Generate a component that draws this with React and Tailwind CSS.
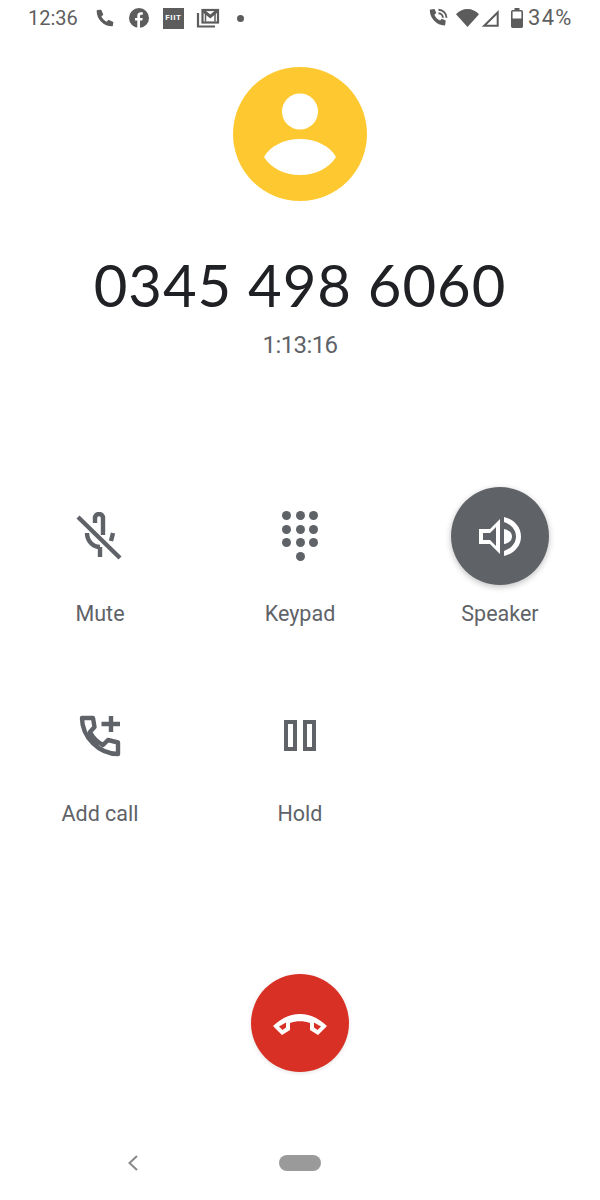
import React from "react";

const G = "#5f6368";
const S = "#5c5c5c";

function StatusBar() {
  return (
    <div className="flex h-9 items-center justify-between px-7 text-[#5f5f5f]">
      <div className="flex items-center">
        <span className="w-[50px] text-[20px] leading-9 font-['Roboto',sans-serif]">12:36</span>
        <svg className="ml-[17px]" width="20" height="20" viewBox="0 0 24 24" fill={S}>
          <path d="M3 2.500 7.500 2 10 8 7.600 10.200c1.300 2.700 3.600 5 6.400 6.400l2.200-2.600 5.800 2.700-.5 4.300c-.1.600-.5 1-1 1C10.500 22 2 13.500 2 3.500c0-.5.400-.9 1-1Z" />
        </svg>
        <svg className="ml-[14px]" width="20" height="20" viewBox="0 0 20 20">
          <circle cx="10" cy="10" r="10" fill={S} />
          <path d="M8.300 20v-7.400H6v-2.700h2.300V8c0-2.400 1.300-3.700 3.500-3.700 1 0 1.800.1 2 .1v2.400h-1.400c-1.100 0-1.400.6-1.400 1.400v1.700h2.700l-.4 2.700h-2.300V20Z" fill="#fff" />
        </svg>
        <div className="ml-[14px] flex h-[21px] w-[21px] items-center justify-center bg-[#5c5c5c] font-['Roboto',sans-serif] text-[8px] font-bold tracking-[0.6px] text-white">FIIT</div>
        <svg className="ml-[12px]" width="24" height="20" viewBox="0 0 24 20" fill="none">
          <path d="M2 5v13.500h17" stroke={S} strokeWidth="2.200" />
          <rect x="6.500" y="2" width="15.500" height="12.500" fill="#fff" stroke={S} strokeWidth="2.200" />
          <path d="M7 2.500 14.250 8.500 21.500 2.500" stroke={S} strokeWidth="3" />
          <path d="M9.500 4.500v9M19 4.500v9" stroke={S} strokeWidth="1.500" />
        </svg>
        <div className="ml-[17px] h-[7px] w-[7px] rounded-full bg-[#5c5c5c]" />
      </div>
      <div className="flex items-center">
        <svg width="19" height="20" viewBox="0 0 19 20" fill="none">
          <path d="M1.500 1.500 5.500 1l1.800 4-1.900 1.800c1 2.600 3 4.700 5.700 5.800l1.600-1.900 4 1.800-.5 4.200c0 .4-.4.7-.8.700C7.800 17.400.8 10.400.8 2.300c0-.4.300-.8.700-.8Z" fill={S} />
          <path d="M9.500 5.300c2.500 0 4.400 2 4.400 4.500M9.500 1.800c4.400 0 8 3.600 8 8" stroke={S} strokeWidth="1.900" />
        </svg>
        <svg className="ml-[8px]" width="23" height="18" viewBox="0 0 23 18" fill={S}>
          <path d="M0 5.200C3 2 7 0 11.500 0S20 2 23 5.200L11.500 18Z" />
        </svg>
        <svg className="ml-[2px]" width="18" height="18" viewBox="0 0 18 18" fill="none">
          <path d="M16.700 3.500V16.700H3.200Z" stroke={S} strokeWidth="2" />
        </svg>
        <svg className="ml-[12px]" width="12" height="20" viewBox="0 0 12 20" fill="none">
          <path d="M3.500 0h5v2h-5Z" fill={S} />
          <rect x="0.800" y="2.800" width="10.400" height="16.400" rx="1" stroke={S} strokeWidth="1.600" />
          <rect x="0.800" y="10.500" width="10.400" height="9" fill={S} />
        </svg>
        <span className="ml-[5px] w-[44px] text-[22px] leading-9 tracking-[1.3px] font-['Roboto',sans-serif]">34%</span>
      </div>
    </div>
  );
}

function CallAction({ label, active, children }) {
  return (
    <div className="flex flex-col items-center">
      <div className={"flex h-[98px] w-[98px] items-center justify-center rounded-full " + (active ? "bg-[#5f6368] shadow-[0_2px_6px_rgba(0,0,0,0.25)]" : "")}>
        {children}
      </div>
      <div className="mt-[15px] text-[21.5px] leading-7 text-[#5f6368] font-['Roboto',sans-serif]">{label}</div>
    </div>
  );
}

export default function App() {
  return (
    <div className="flex h-[1200px] w-[600px] flex-col overflow-hidden bg-white font-['Roboto',sans-serif]">
      <StatusBar />
      <div className="mt-[31px] flex justify-center">
        <svg width="134" height="134" viewBox="0 0 134 134">
          <circle cx="67" cy="67" r="67" fill="#fdc830" />
          <circle cx="67" cy="44.500" r="18" fill="#fff" />
          <path d="M31 90C37 79 51 72 67 72C83 72 97 79 103 90C96 101 83 108 67 108C51 108 38 101 31 90Z" fill="#fff" />
        </svg>
      </div>
      <div className="mt-[47px] text-center text-[58px] leading-[74px] tracking-[1px] text-[#202124] font-['Lato',sans-serif]">0345 498 6060</div>
      <div className="mt-[7px] text-center text-[24px] leading-8 tracking-[-0.6px] text-[#5f6368] font-['Roboto',sans-serif]">1:13:16</div>

      <div className="mt-[126px] grid grid-cols-3 gap-y-[59px]">
        <CallAction label="Mute">
          <svg width="48" height="48" viewBox="0 0 48 48" fill="none" stroke={G} strokeWidth="4.400">
            <path d="M19 11V6a4 4 0 0 1 8 0v17" />
            <path d="M11 21c0 8 6 14 13 14M37 21l-2 8" />
            <path d="M24 35v10" />
            <path d="M2 5 44 46" />
          </svg>
        </CallAction>
        <CallAction label="Keypad">
          <div className="grid grid-cols-3 gap-[4.500px]">
            {["1","2","3","4","5","6","7","8","9"].map((k) => (
              <div key={k} className="h-[9px] w-[9px] rounded-full bg-[#5f6368]" />
            ))}
            <div className="col-start-2 h-[9px] w-[9px] rounded-full bg-[#5f6368]" />
          </div>
        </CallAction>
        <CallAction label="Speaker" active>
          <svg width="42" height="41" viewBox="0 0 42 41" fill="#fff">
            <path fillRule="evenodd" d="M0 13h11L21 3v35L11 28H0ZM4 17v7h7l6 6V11l-6 6Z" />
            <path d="M25 13c4 1 8 3 8 7.500S29 27 25 28Z" />
            <path d="M25 1c9 2 17 9 17 19.500S34 38 25 40v-5c6-2 12-7 12-14.500S31 8 25 6Z" />
          </svg>
        </CallAction>
        <CallAction label="Add call">
          <svg width="42" height="42" viewBox="0 0 42 42" fill="none" stroke={G} strokeWidth="4.400">
            <path d="M3 3h11l1.500 9L11 17c3 6 7 10 13 13l5-5 10 2.500V39C20 39 3 22 3 3Z" strokeLinejoin="round" />
            <path d="M32 1v16M22.500 9H41" />
          </svg>
        </CallAction>
        <CallAction label="Hold">
          <svg width="32" height="32" viewBox="0 0 32 32" fill="none" stroke={G} strokeWidth="4">
            <rect x="2" y="2" width="9" height="27" />
            <rect x="21" y="2" width="9" height="27" />
          </svg>
        </CallAction>
      </div>

      <div className="mt-[146px] flex justify-center">
        <div className="flex h-[98px] w-[98px] items-center justify-center rounded-full bg-[#d93025] shadow-[0_1px_4px_rgba(0,0,0,0.12)]">
          <svg className="mt-[2px]" width="54" height="21" viewBox="0 0 54 21" fill="#fff">
            <path fillRule="evenodd" d="M0 12C7 5 17 0 27 0S47 5 54 12L45 21 37 16V9C31 6.500 23 6.500 17 9V16L9 21ZM6 12.500l3.500 3.500 3.500-2.500V8.500ZM48 12.500 44.500 16 41 13.500V8.500Z" />
          </svg>
        </div>
      </div>

      <div className="mt-[81px] flex h-5 items-center pl-[126px]">
        <svg width="14" height="18" viewBox="0 0 14 18" fill="none" stroke="#888" strokeWidth="2">
          <path d="M11 2 3.500 9l7.500 7" />
        </svg>
        <div className="ml-[139px] h-[16px] w-[42px] rounded-full bg-[#9a9a9a]" />
      </div>
    </div>
  );
}
